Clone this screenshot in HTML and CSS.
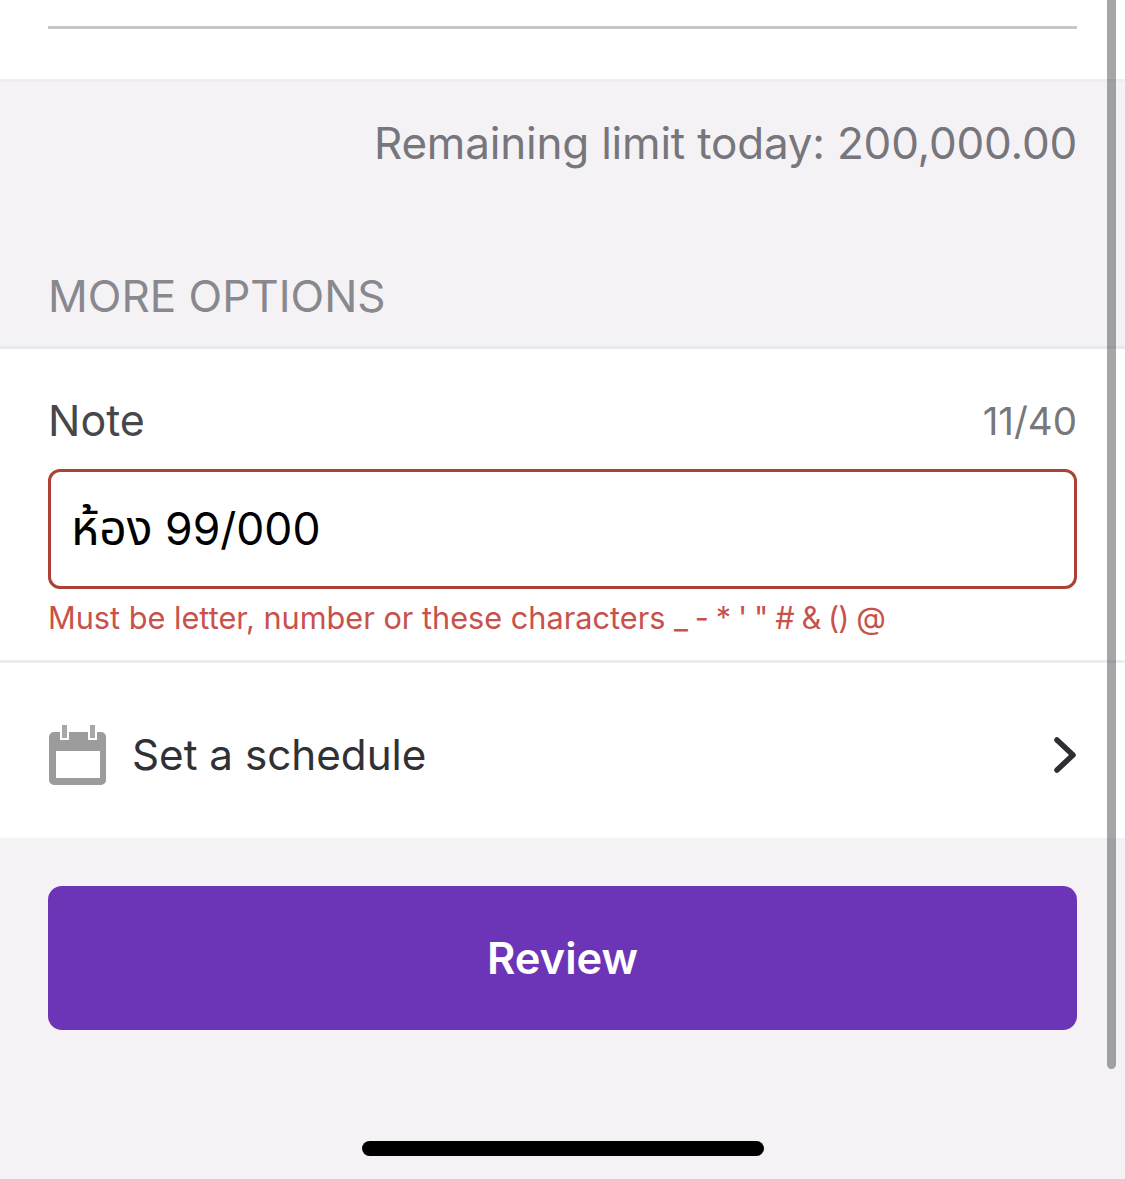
FILE: index.html
```html
<!DOCTYPE html>
<html lang="en">
<head>
<meta charset="UTF-8" />
<meta name="viewport" content="width=device-width, initial-scale=1" />
<title>Review transfer</title>
<link rel="stylesheet" href="styles.css">
</head>
<body>
  <div class="amount-section">
    <div class="amount-line"></div>
  </div>

  <div class="limit-section">
    <p class="limit-text">Remaining limit today: 200,000.00</p>
    <h2 class="section-title">MORE OPTIONS</h2>
  </div>

  <div class="note-section">
    <div class="note-head">
      <span class="note-label">Note</span>
      <span class="note-count">11/40</span>
    </div>
    <div class="note-input"><span class="note-thai">ห้อง</span> 99/000</div>
    <p class="note-error">Must be letter, number or these characters <span class="note-symbols">_ - * ' " # &amp; () @</span></p>
  </div>

  <div class="schedule-row">
    <svg class="calendar-icon" width="58" height="60" viewBox="0 0 58 60">
      <path fill="#9c9c9c" fill-rule="evenodd" d="M5 7h47a5 5 0 0 1 5 5v43a5 5 0 0 1-5 5H5a5 5 0 0 1-5-5V12a5 5 0 0 1 5-5zM7 26v27h44V26z"/>
      <rect x="11" y="5" width="9" height="10" fill="#fff"/>
      <rect x="39" y="5" width="9" height="10" fill="#fff"/>
      <rect x="13" y="0" width="5" height="13" fill="#a8a8a8"/>
      <rect x="41" y="0" width="5" height="13" fill="#a8a8a8"/>
    </svg>
    <span class="schedule-label">Set a schedule</span>
    <svg class="chevron" width="24" height="38" viewBox="0 0 24 38">
      <path d="M4 4l16 15L4 34" fill="none" stroke="#2f2f33" stroke-width="5.5" stroke-linecap="round" stroke-linejoin="round"/>
    </svg>
  </div>

  <div class="footer-section">
    <button class="review-btn">Review</button>
    <div class="home-bar"></div>
  </div>

  <div class="scrollbar"></div>
</body>
</html>
```

FILE: styles.css
```css
* {
  box-sizing: border-box;
}
body {
  margin: 0;
  width: 1125px;
  height: 1179px;
  overflow: hidden;
  position: relative;
  background-color: #f4f2f5;
  font-family: Inter, "Noto Sans", "Noto Sans Thai", "DejaVu Sans", sans-serif;
}
.amount-section {
  height: 82px;
  padding-top: 26px;
  background-color: #fff;
  border-bottom: 3px solid #eeedef;
}
.amount-line {
  height: 3px;
  margin: 0 48px;
  background-color: #c6c6c8;
}
.limit-section {
  height: 267px;
  padding: 35px 48px 0;
  border-bottom: 3px solid #e9e9eb;
}
.limit-text {
  margin: 0;
  height: 53px;
  line-height: 53px;
  font-size: 44px;
  letter-spacing: -0.2px;
  text-align: right;
  color: #76767c;
}
.section-title {
  margin: 100px 0 0;
  line-height: 53px;
  font-size: 44px;
  font-weight: 400;
  color: #88888e;
}
.note-section {
  height: 314px;
  padding: 45px 48px 0;
  background-color: #fff;
  border-bottom: 3px solid #ededef;
}
.note-head {
  display: flex;
  justify-content: space-between;
  align-items: center;
  height: 52px;
}
.note-label {
  font-size: 43px;
  color: #47474b;
}
.note-count {
  margin-top: 2px;
  font-size: 38.5px;
  color: #77777c;
}
.note-input {
  height: 120px;
  margin-top: 23px;
  padding-left: 20px;
  border: 3px solid #ac4235;
  border-radius: 12px;
  font-size: 44.5px;
  line-height: 112px;
  color: #000;
}
.note-thai {
  font-size: 48px;
}
.note-error {
  margin: 11px 0 0;
  font-size: 30.7px;
  line-height: 36px;
  color: #c8524b;
}
.note-symbols {
  letter-spacing: -0.9px;
}
.schedule-row {
  display: flex;
  align-items: center;
  height: 175px;
  padding: 8px 48px 0;
  background-color: #fff;
}
.calendar-icon {
  flex: none;
  margin-left: 1px;
}
.schedule-label {
  flex: 1;
  margin-left: 25px;
  font-size: 42.2px;
  color: #313135;
}
.footer-section {
  height: 341px;
  padding: 48px 48px 0;
}
.review-btn {
  display: block;
  width: 100%;
  height: 144px;
  border: none;
  border-radius: 14px;
  background-color: #6c35b7;
  color: #fff;
  font-family: inherit;
  font-size: 43.5px;
  font-weight: 600;
}
.home-bar {
  width: 402px;
  height: 15px;
  margin: 111px auto 0;
  border-radius: 8px;
  background-color: #000;
}
.scrollbar {
  position: absolute;
  top: 0;
  left: 1107px;
  width: 9px;
  height: 1069px;
  border-radius: 0 0 5px 5px;
  background-color: rgba(70, 70, 75, 0.48);
}
```
